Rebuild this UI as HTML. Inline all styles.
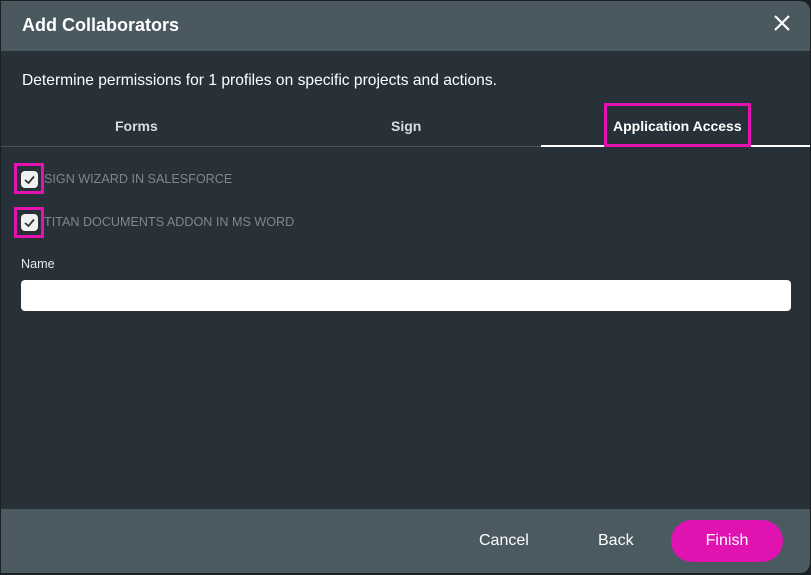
<!DOCTYPE html>
<html><head><style>
body{margin:0;width:811px;height:575px;background:#1b2024;font-family:"Liberation Sans",sans-serif;overflow:hidden;position:relative}
.dlg{position:absolute;left:1px;top:1px;width:809px;height:572px;background:#273137;border-radius:0 10px 10px 0;overflow:hidden}
.hdr{position:absolute;left:0;top:0;width:100%;height:50px;background:#4a5960}
.hdr .t{position:absolute;left:21px;top:14px;color:#fff;font-weight:bold;font-size:18px}
.x{position:absolute;left:772px;top:13px;width:18px;height:18px}
.desc{position:absolute;left:21px;top:71px;color:#fff;font-size:15.6px}
.tab{position:absolute;top:117px;color:#d8dcde;font-weight:bold;font-size:14px}
.line{position:absolute;left:0;top:145px;width:540px;height:1px;background:#4a555b}
.aline{position:absolute;left:540px;top:144px;width:269px;height:2px;background:#fff}
.pink{position:absolute;border:3px solid #e312b0;box-sizing:border-box}
.cb{position:absolute;width:17px;height:17px;background:#f2f2f2;border-radius:4px}
.lbl{position:absolute;color:#7d878c;font-size:12.6px}
.inp{position:absolute;left:20px;top:279px;width:770px;height:31px;background:#fff;border-radius:4px}
.ftr{position:absolute;left:0;top:508px;width:100%;height:64px;background:#4b5a61}
.btn{position:absolute;color:#fff;font-size:16px;top:531px}
.fin{position:absolute;left:670px;top:519px;width:112px;height:42px;background:#e012b0;border-radius:21px;color:#fff;font-size:16px;text-align:center;line-height:42px}
</style></head><body>
<div class="dlg">
<div class="hdr"><div class="t">Add Collaborators</div>
<svg class="x" viewBox="0 0 18 18"><path d="M2 2L16 16M16 2L2 16" stroke="#fff" stroke-width="2.2"/></svg></div>
<div class="desc">Determine permissions for 1 profiles on specific projects and actions.</div>
<div class="tab" style="left:114px">Forms</div>
<div class="tab" style="left:390px">Sign</div>
<div class="tab" style="left:612px;color:#fff">Application Access</div>
<div class="line"></div><div class="aline"></div>
<div class="pink" style="left:603px;top:102px;width:147px;height:44px"></div>
<div class="pink" style="left:13px;top:162px;width:30px;height:31px"></div>
<div class="cb" style="left:20px;top:170px"><svg width="17" height="17"><path d="M4 9L7.5 12L13 5.5" stroke="#333" stroke-width="1.8" fill="none"/></svg></div>
<div class="lbl" style="left:43px;top:171px">SIGN WIZARD IN SALESFORCE</div>
<div class="pink" style="left:13px;top:206px;width:30px;height:31px"></div>
<div class="cb" style="left:20px;top:213px"><svg width="17" height="17"><path d="M4 9L7.5 12L13 5.5" stroke="#333" stroke-width="1.8" fill="none"/></svg></div>
<div class="lbl" style="left:43px;top:214px">TITAN DOCUMENTS ADDON IN MS WORD</div>
<div class="lbl" style="left:20px;top:256px;color:#e6e9ea">Name</div>
<div class="inp"></div>
<div class="ftr"></div>
<div class="btn" style="left:478px">Cancel</div>
<div class="btn" style="left:597px">Back</div>
<div class="fin">Finish</div>
</div>
</body></html>
